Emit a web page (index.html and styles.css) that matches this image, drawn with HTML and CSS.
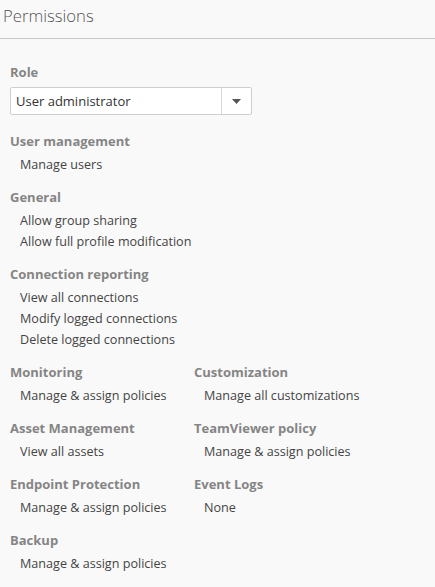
FILE: index.html
```html
<!DOCTYPE html>
<html lang="en">
  <head>
    <meta charset="UTF-8" />
    <meta name="viewport" content="width=device-width, initial-scale=1.0" />
    <title>Permissions</title>
    <link rel="stylesheet" href="styles.css">
  </head>
  <body>
    <header class="page-header">
      <h1>Permissions</h1>
    </header>

    <main class="permissions">
      <section class="group">
        <h2 class="group-title">Role</h2>
        <div class="select">
          <span class="select-value">User administrator</span>
          <span class="select-toggle">
            <svg width="9" height="5" viewBox="0 0 9 5"><path d="M0 0h9L4.5 5z" fill="#555"/></svg>
          </span>
        </div>
      </section>

      <section class="group">
        <h2 class="group-title">User management</h2>
        <ul class="items">
          <li>Manage users</li>
        </ul>
      </section>

      <section class="group">
        <h2 class="group-title">General</h2>
        <ul class="items">
          <li>Allow group sharing</li>
          <li>Allow full profile modification</li>
        </ul>
      </section>

      <section class="group">
        <h2 class="group-title">Connection reporting</h2>
        <ul class="items">
          <li>View all connections</li>
          <li>Modify logged connections</li>
          <li>Delete logged connections</li>
        </ul>
      </section>

      <div class="columns">
        <section class="group">
          <h2 class="group-title">Monitoring</h2>
          <ul class="items">
            <li>Manage &amp; assign policies</li>
          </ul>
        </section>
        <section class="group">
          <h2 class="group-title">Customization</h2>
          <ul class="items">
            <li>Manage all customizations</li>
          </ul>
        </section>
        <section class="group">
          <h2 class="group-title">Asset Management</h2>
          <ul class="items">
            <li>View all assets</li>
          </ul>
        </section>
        <section class="group">
          <h2 class="group-title">TeamViewer policy</h2>
          <ul class="items">
            <li>Manage &amp; assign policies</li>
          </ul>
        </section>
        <section class="group">
          <h2 class="group-title">Endpoint Protection</h2>
          <ul class="items">
            <li>Manage &amp; assign policies</li>
          </ul>
        </section>
        <section class="group">
          <h2 class="group-title">Event Logs</h2>
          <ul class="items">
            <li>None</li>
          </ul>
        </section>
        <section class="group">
          <h2 class="group-title">Backup</h2>
          <ul class="items">
            <li>Manage &amp; assign policies</li>
          </ul>
        </section>
      </div>
    </main>
  </body>
</html>
```

FILE: styles.css
```css
body {
  font-family: "Open Sans", "Noto Sans", Arial, sans-serif;
  margin: 0;
  padding: 0;
  background-color: #f9f9f9;
  color: #444;
}

.page-header {
  padding: 5px 3px 0;
  height: 33px;
  border-bottom: 1px solid #c8c8c8;
}

h1 {
  margin: 0;
  font-size: 16.7px;
  font-weight: 300;
  line-height: 22px;
  color: #555;
}

.permissions {
  padding: 23px 10px 0;
}

.group {
  margin-bottom: 12px;
}

.group-title {
  margin: 0 0 2px;
  font-size: 13px;
  font-weight: 700;
  line-height: 21px;
  color: #858585;
}

.items {
  list-style: none;
  margin: 0;
  padding: 0 0 0 10px;
}

.items li {
  font-size: 12.6px;
  line-height: 21px;
  color: #444;
}

.select {
  display: flex;
  width: 242px;
  height: 28px;
  margin-top: 4px;
  margin-bottom: 16px;
  box-sizing: border-box;
  background: #fff;
  border: 1px solid #cfcfcf;
  border-radius: 2px;
}

.select-value {
  flex: 1;
  padding-left: 5px;
  font-size: 13px;
  line-height: 26px;
  color: #333;
}

.select-toggle {
  display: flex;
  align-items: center;
  justify-content: center;
  width: 29px;
  border-left: 1px solid #d8d8d8;
}

.columns {
  display: grid;
  grid-template-columns: 184px 1fr;
}
```
